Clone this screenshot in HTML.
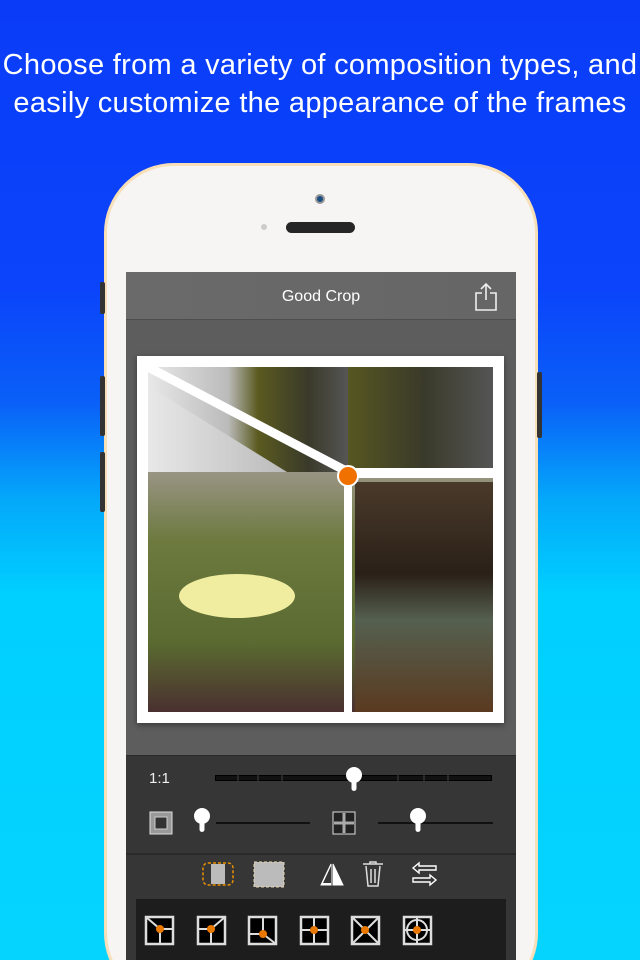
<!DOCTYPE html>
<html><head><meta charset="utf-8"><style>
*{margin:0;padding:0;box-sizing:border-box}
html{width:640px;height:960px;overflow:hidden}
body{width:640px;height:960px;overflow:hidden;position:relative;font-family:"Liberation Sans",sans-serif;
background:linear-gradient(180deg,#0a3cf8 0%,#0b44fa 30%,#0a60f8 42%,#04a8fa 52%,#00d0ff 62%,#05d4ff 100%)}
.title{position:absolute;top:46px;left:0;width:640px;text-align:center;color:#fff;font-size:29px;line-height:38px;letter-spacing:0.3px}
.phone{position:absolute;left:104px;top:163px;width:434px;height:840px;border-radius:70px;background:#f6f5f3;border:3px solid #f7dfb8}
.btn{position:absolute;width:5px;background:#333;border-radius:2px}
.screen{position:absolute;left:126px;top:272px;width:390px;height:700px;background:#5d5d5d}
.nav{position:absolute;left:0;top:0;width:390px;height:48px;background:linear-gradient(90deg,#6a6a6a,#666);border-bottom:1px solid #4e4e4e;color:#fff;font-size:16px;text-align:center;line-height:50px}
.frame{position:absolute;left:11px;top:84px;width:367px;height:367px;background:#fff;box-shadow:0 2px 6px rgba(0,0,0,.4)}
.tools{position:absolute;left:0;top:483px;width:390px;height:230px;background:#363636;border-top:1px solid #2a2a2a}
.strip{position:absolute;left:10px;top:143px;width:370px;height:80px;background:#1d1d1d}
</style></head><body>
<div class="title">Choose from a variety of composition types, and<br>easily customize the appearance of the frames</div>
<div class="phone"></div>
<div class="btn" style="left:100px;top:282px;height:32px"></div>
<div class="btn" style="left:100px;top:376px;height:60px"></div>
<div class="btn" style="left:100px;top:452px;height:60px"></div>
<div class="btn" style="left:537px;top:372px;height:66px"></div>
<div style="position:absolute;left:315px;top:194px;width:10px;height:10px;border-radius:50%;background:#1a4d80;border:2px solid #999"></div>
<div style="position:absolute;left:261px;top:224px;width:6px;height:6px;border-radius:50%;background:#ccc"></div>
<div style="position:absolute;left:286px;top:222px;width:69px;height:11px;border-radius:6px;background:#262626"></div>
<div class="screen">
 <div class="nav">Good Crop
  <svg style="position:absolute;right:18px;top:10px" width="24" height="30" viewBox="0 0 24 30" fill="none" stroke="#eee" stroke-width="1.6"><path d="M8 11H2v17h20V11h-6M12 2v16M7 7l5-5 5 5"/></svg>
 </div>
 <div class="frame">
  <svg width="367" height="367" viewBox="0 0 367 367" style="position:absolute;left:0;top:0">
   <defs>
    <linearGradient id="g1" x1="0" y1="0" x2="0" y2="1"><stop offset="0" stop-color="#c9c4bc"/><stop offset=".3" stop-color="#9a9585"/><stop offset=".5" stop-color="#6d7a40"/><stop offset=".8" stop-color="#5a6a30"/><stop offset="1" stop-color="#4a3030"/></linearGradient>
    <linearGradient id="g2" x1="0" y1="0" x2="1" y2="0"><stop offset="0" stop-color="#e8e8e8"/><stop offset=".4" stop-color="#bbb"/><stop offset=".55" stop-color="#5a5a20"/><stop offset=".8" stop-color="#3a3a2a"/><stop offset="1" stop-color="#555"/></linearGradient>
    <linearGradient id="g3" x1="0" y1="0" x2="0" y2="1"><stop offset="0" stop-color="#4a3a2a"/><stop offset=".4" stop-color="#2a2018"/><stop offset=".6" stop-color="#556050"/><stop offset="1" stop-color="#5a3a20"/></linearGradient>
   </defs>
   <rect x="11" y="11" width="345" height="345" fill="url(#g1)"/>
   <rect x="11" y="11" width="345" height="105" fill="url(#g2)"/>
   <polygon points="11,11 11,30 150,116 211,116 211,11" fill="url(#g2)"/>
   <ellipse cx="100" cy="240" rx="58" ry="22" fill="#f1eda0"/>
   <rect x="218" y="126" width="138" height="230" fill="url(#g3)"/>
   <path d="M11 11 L211 116" stroke="#fff" stroke-width="9"/>
   <rect x="207" y="116" width="8" height="240" fill="#fff"/>
   <rect x="211" y="112" width="150" height="10" fill="#fff"/>
   <rect x="0" y="0" width="367" height="11" fill="#fff"/><rect x="0" y="356" width="367" height="11" fill="#fff"/>
   <rect x="0" y="0" width="11" height="367" fill="#fff"/><rect x="356" y="0" width="11" height="367" fill="#fff"/>
   <circle cx="211" cy="120" r="10" fill="#f07000" stroke="#fff" stroke-width="2"/>
  </svg>
 </div>
 <div class="tools">
  <div style="position:absolute;left:23px;top:14px;color:#eee;font-size:15px">1:1</div>
  <div style="position:absolute;left:89px;top:19px;width:277px;height:6px;background:#111;border:1px solid #000"></div>
  <svg style="position:absolute;left:0;top:0" width="390" height="230">
   <g stroke="#444" stroke-width="1"><path d="M112 19v6M132 19v6M156 19v6M272 19v6M298 19v6M322 19v6"/></g>
   <path d="M90 67h94M252 67h115" stroke="#111" stroke-width="2"/>
   <circle cx="228" cy="19" r="8" fill="#fff"/><rect x="225.5" y="22" width="5" height="13" rx="2.5" fill="#fff"/>
   <circle cx="76" cy="60" r="8" fill="#fff"/><rect x="73.5" y="63" width="5" height="13" rx="2.5" fill="#fff"/>
   <circle cx="292" cy="60" r="8" fill="#fff"/><rect x="289.5" y="63" width="5" height="13" rx="2.5" fill="#fff"/>
   <rect x="24" y="56" width="22" height="22" fill="#999" stroke="#ddd"/><rect x="29" y="61" width="12" height="12" fill="#333" stroke="#ccc"/>
   <rect x="207" y="56" width="22" height="22" fill="#222" stroke="#ddd"/><path d="M218 57v20M208 67h20" stroke="#aaa" stroke-width="3"/>
   <path d="M0 98h390" stroke="#2a2a2a" stroke-width="2"/>
   <rect x="77" y="107" width="30" height="22" rx="5" fill="none" stroke="#e89000" stroke-dasharray="3 2" stroke-width="1.5"/><rect x="85" y="108" width="14" height="20" fill="#bbb"/>
   <rect x="128" y="106" width="30" height="25" fill="#bbb" stroke="#e8d8b0" stroke-dasharray="3 2"/>
   <path d="M195 129l10-21v21zM207 108l10 21h-10z" fill="#fff" stroke="#fff" stroke-width="1"/><path d="M197 127l8-17v17z" fill="#363636"/>
   <path d="M237 108h20M244 108v-2h6v2M240 110l2 20h10l2-20M245 113v14M249 113v14" fill="none" stroke="#ddd" stroke-width="1.5"/>
   <path d="M293 107l-6 5 6 5v-3h17v-4h-17zM304 119l6 5-6 5v-3h-17v-4h17z" fill="none" stroke="#fff" stroke-width="1.4"/>
  </svg>
  <div class="strip">
   <svg width="370" height="80" viewBox="0 0 370 80">
    <g fill="#000" stroke="#ddd" stroke-width="2.5">
     <rect x="10" y="18" width="27" height="27"/><rect x="62" y="18" width="27" height="27"/><rect x="113" y="18" width="27" height="27"/>
     <rect x="165" y="18" width="27" height="27"/><rect x="216" y="18" width="27" height="27"/><rect x="268" y="18" width="27" height="27"/>
    </g>
    <g stroke="#ddd" stroke-width="2" fill="none">
     <path d="M10 18l14 12v15M24 30h13"/><path d="M89 18l-14 12v15M62 30h13"/><path d="M127 18v17h-14M127 35l13 10"/>
     <path d="M178 18v27M165 31h27"/><path d="M216 18l27 27M243 18l-27 27"/><circle cx="281" cy="31" r="10"/><path d="M281 18v27M268 31h27"/>
    </g>
    <g fill="#e87800"><circle cx="24" cy="30" r="4"/><circle cx="75" cy="30" r="4"/><circle cx="127" cy="35" r="4"/><circle cx="178" cy="31" r="4"/><circle cx="229" cy="31" r="4"/><circle cx="281" cy="31" r="4"/></g>
   </svg>
  </div>
 </div>
</div>
</body></html>
